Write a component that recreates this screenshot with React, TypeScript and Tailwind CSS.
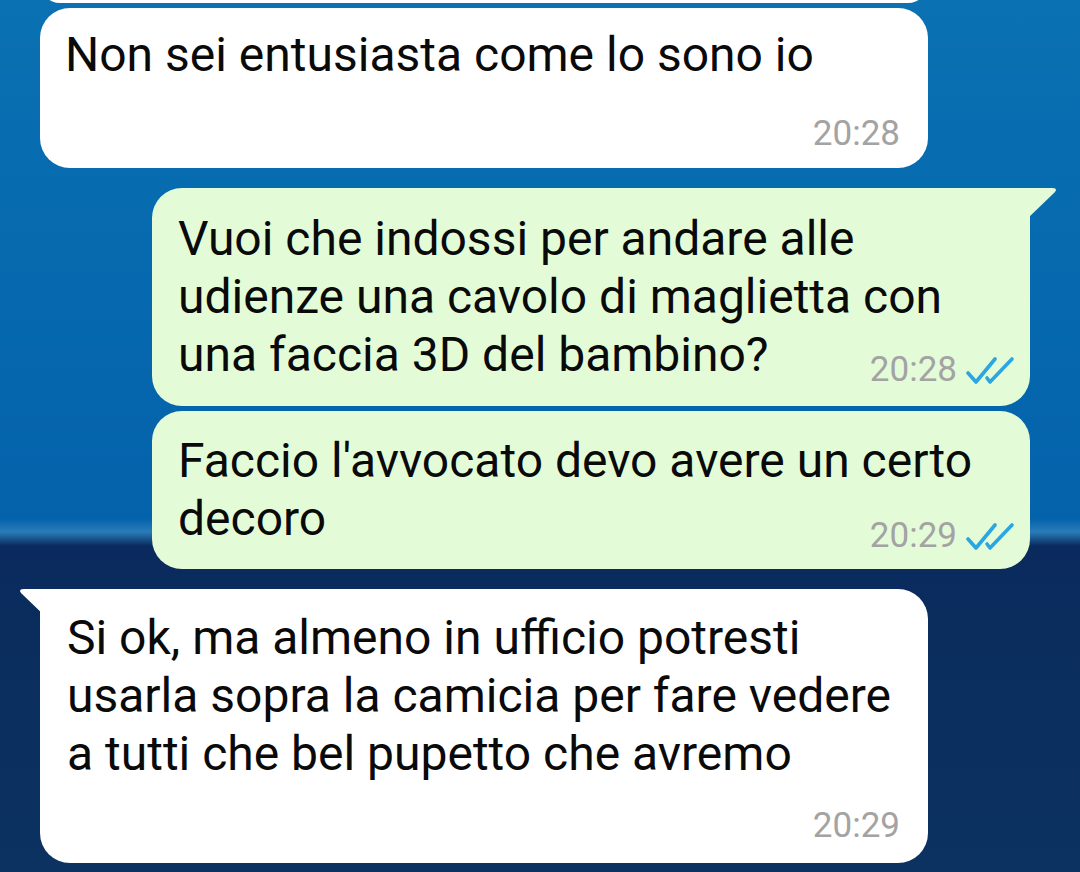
import React from "react";

const DoubleTick = () => (
  <svg width="50" height="30" viewBox="0 0 50 30" fill="none" className="ml-[9px] mb-[4px]">
    <path d="M2 17 L10 26 L29 3" stroke="#2ba6e2" strokeWidth="3.6" strokeLinecap="round" strokeLinejoin="round" />
    <path d="M21 22 L24 26 L46 3" stroke="#2ba6e2" strokeWidth="3.6" strokeLinecap="round" strokeLinejoin="round" />
  </svg>
);

const Time = ({ t, ticks }: { t: string; ticks?: boolean }) => (
  <div className="flex items-end">
    <span className="text-[35px] leading-[40px] text-[#a3a3a3]">{t}</span>
    {ticks && <DoubleTick />}
  </div>
);

const line = "text-[48px] leading-[58px] text-[#0a0a0a]";

const App = () => {
  return (
    <div
      className="w-[1080px] h-[872px] overflow-hidden bg-[linear-gradient(to_bottom,#0a71b2_0%,#0668ae_35%,#0462ab_59.5%,#2a7cb9_61%,#0a2a5d_62.6%,#0b2f5e_80%,#0b3261_100%)]"
      style={{ fontFamily: "Roboto, 'Noto Sans', sans-serif" }}
    >
      {/* bottom of previous bubble */}
      <div className="ml-[40px] w-[888px] h-[40px] mt-[-37px] bg-white rounded-[30px]" />

      {/* incoming 1 */}
      <div className="ml-[40px] mt-[5px] w-[888px] h-[160px] bg-white rounded-[30px] pl-[25px] pr-[28px] pt-[18px] pb-[14px] flex flex-col justify-between">
        <div className={line}>Non sei entusiasta come lo sono io</div>
        <div className="flex justify-end">
          <Time t="20:28" />
        </div>
      </div>

      {/* outgoing 1 */}
      <div className="relative ml-[152px] mt-[20px] w-[878px] h-[218px] bg-[#e3fcd7] rounded-[30px] rounded-tr-none pl-[26px] pr-[14px] pt-[22px]">
        <svg width="30" height="30" viewBox="0 0 30 30" className="absolute right-[-28px] top-0">
          <path d="M0 0 L24 0 Q30 0 27 4 L0 30 Z" fill="#e3fcd7" />
        </svg>
        <div className={line}>Vuoi che indossi per andare alle</div>
        <div className={line}>udienze una cavolo di maglietta con</div>
        <div className="flex justify-between items-end">
          <div className={line}>una faccia 3D del bambino?</div>
          <div className="mb-[-6px]">
            <Time t="20:28" ticks />
          </div>
        </div>
      </div>

      {/* outgoing 2 */}
      <div className="ml-[152px] mt-[5px] w-[878px] h-[158px] bg-[#e3fcd7] rounded-[30px] pl-[26px] pr-[14px] pt-[21px]">
        <div className={line}>Faccio l'avvocato devo avere un certo</div>
        <div className="flex justify-between items-end">
          <div className={line}>decoro</div>
          <div className="mb-[-8px]">
            <Time t="20:29" ticks />
          </div>
        </div>
      </div>

      {/* incoming 2 */}
      <div className="relative ml-[40px] mt-[20px] w-[888px] h-[274px] bg-white rounded-[30px] rounded-tl-none pl-[27px] pr-[28px] pt-[20px] flex flex-col">
        <svg width="30" height="30" viewBox="0 0 30 30" className="absolute left-[-22px] top-0">
          <path d="M30 0 L6 0 Q0 0 3 4 L30 30 Z" fill="#ffffff" />
        </svg>
        <div className={line}>Si ok, ma almeno in ufficio potresti</div>
        <div className={line}>usarla sopra la camicia per fare vedere</div>
        <div className={line}>a tutti che bel pupetto che avremo</div>
        <div className="flex justify-end mt-[23px]">
          <Time t="20:29" />
        </div>
      </div>
    </div>
  );
};

export default App;
